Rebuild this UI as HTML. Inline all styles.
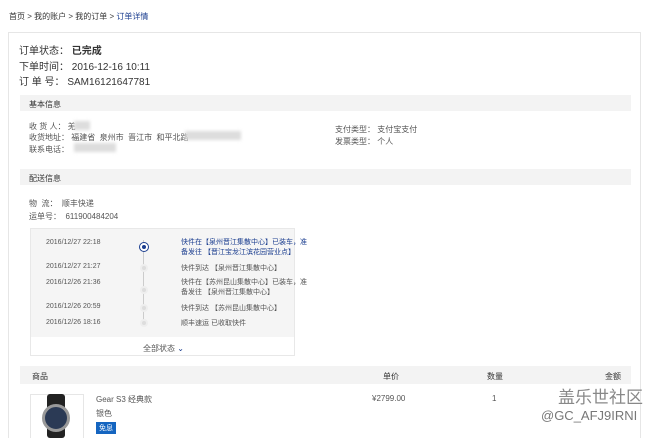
<!DOCTYPE html>
<html><head><meta charset="utf-8"><style>
*{margin:0;padding:0;box-sizing:border-box}
html,body{width:650px;height:438px;overflow:hidden}
body{background:#fff;font-family:"Liberation Sans","Noto Sans CJK SC",sans-serif;color:#333;position:relative;font-size:8px}
.a{position:absolute;white-space:nowrap}
.bar{position:absolute;left:20px;width:611px;background:#f3f3f3}
.g{color:#555}
.blur{position:absolute;background:#ddd;filter:blur(1.5px)}
.dot{position:absolute;left:140px;width:8px;height:8px;border-radius:50%;background:#ddd;border:2px solid #eee}
</style></head><body>
<div class="a" style="left:9px;top:11px">首页 &gt; 我的账户 &gt; 我的订单 &gt; <span style="color:#1a3d8f">订单详情</span></div>
<div class="a" style="left:8px;top:32px;width:633px;height:420px;border:1px solid #e6e6e6"></div>
<div class="a" style="left:19px;top:42px;font-size:10px">订单状态： <b style="font-weight:600">已完成</b></div>
<div class="a" style="left:19px;top:58px;font-size:10px">下单时间： 2016-12-16 10:11</div>
<div class="a" style="left:19px;top:73px;font-size:10px">订 单 号： SAM16121647781</div>
<div class="bar" style="top:95px;height:16px"></div>
<div class="a" style="left:29px;top:99px">基本信息</div>
<div class="a g" style="left:29px;top:121px">收 货 人： 羌</div>
<div class="blur" style="left:74px;top:121px;width:16px;height:9px"></div>
<div class="a g" style="left:29px;top:132px">收货地址： 福建省 &nbsp;泉州市 &nbsp;晋江市 &nbsp;和平北路</div>
<div class="blur" style="left:185px;top:131px;width:56px;height:9px"></div>
<div class="a g" style="left:29px;top:144px">联系电话：</div>
<div class="blur" style="left:74px;top:143px;width:42px;height:9px"></div>
<div class="a g" style="left:335px;top:124px">支付类型： 支付宝支付</div>
<div class="a g" style="left:335px;top:136px">发票类型： 个人</div>
<div class="bar" style="top:169px;height:16px"></div>
<div class="a" style="left:29px;top:173px">配送信息</div>
<div class="a g" style="left:29px;top:198px">物 &nbsp;流： &nbsp;顺丰快递</div>
<div class="a g" style="left:29px;top:211px">运单号： &nbsp;611900484204</div>
<div class="a" style="left:30px;top:228px;width:265px;height:128px;background:#f5f5f5;border:1px solid #e8e8e8"></div>
<div class="a" style="left:31px;top:337px;width:263px;height:18px;background:#fff"></div>
<div class="a" style="left:143px;top:240px;width:1px;height:84px;background:#ccc"></div>
<div class="dot" style="top:243px;background:#1a3d8f;border-color:#fff;box-shadow:0 0 0 1px #1a3d8f"></div>
<div class="dot" style="top:264px"></div>
<div class="dot" style="top:286px"></div>
<div class="dot" style="top:304px"></div>
<div class="dot" style="top:319px"></div>
<div class="a g" style="left:46px;top:239px;font-size:7px">2016/12/27 22:18</div>
<div class="a g" style="left:46px;top:263px;font-size:7px">2016/12/27 21:27</div>
<div class="a g" style="left:46px;top:279px;font-size:7px">2016/12/26 21:36</div>
<div class="a g" style="left:46px;top:303px;font-size:7px">2016/12/26 20:59</div>
<div class="a g" style="left:46px;top:319px;font-size:7px">2016/12/26 18:16</div>
<div class="a" style="left:181px;top:238px;font-size:7px;line-height:10px;color:#1a3d8f">快件在【泉州晋江集散中心】已装车，准<br>备发往 【晋江宝龙江滨花园营业点】</div>
<div class="a g" style="left:181px;top:263px;font-size:7px">快件到达 【泉州晋江集散中心】</div>
<div class="a g" style="left:181px;top:278px;font-size:7px;line-height:10px">快件在【苏州昆山集散中心】已装车，准<br>备发往 【泉州晋江集散中心】</div>
<div class="a g" style="left:181px;top:303px;font-size:7px">快件到达 【苏州昆山集散中心】</div>
<div class="a g" style="left:181px;top:318px;font-size:7px">顺丰速运 已收取快件</div>
<div class="a g" style="left:143px;top:343px">全部状态 <span style="color:#1a3d8f">⌄</span></div>
<div class="bar" style="top:366px;height:18px"></div>
<div class="a" style="left:32px;top:371px">商品</div>
<div class="a" style="left:383px;top:371px">单价</div>
<div class="a" style="left:487px;top:371px">数量</div>
<div class="a" style="left:605px;top:371px">金额</div>
<div class="a" style="left:30px;top:394px;width:54px;height:50px;border:1px solid #e6e6e6"></div>
<div class="a" style="left:47px;top:394px;width:18px;height:44px;background:#222;border-radius:3px"></div>
<div class="a" style="left:42px;top:404px;width:28px;height:28px;border-radius:50%;background:#2b3a55;border:3px solid #999"></div>
<div class="a g" style="left:96px;top:394px">Gear S3 经典款</div>
<div class="a g" style="left:96px;top:408px">银色</div>
<div class="a" style="left:96px;top:422px;padding:1px 3px;background:#1565c0;color:#fff;font-size:7px">免息</div>
<div class="a g" style="left:372px;top:394px">¥2799.00</div>
<div class="a g" style="left:492px;top:394px">1</div>
<div class="a" style="left:558px;top:383px;font-size:17px;color:#888">盖乐世社区</div>
<div class="a" style="left:541px;top:408px;font-size:13px;color:#777">@GC_AFJ9IRNI</div>
</body></html>
